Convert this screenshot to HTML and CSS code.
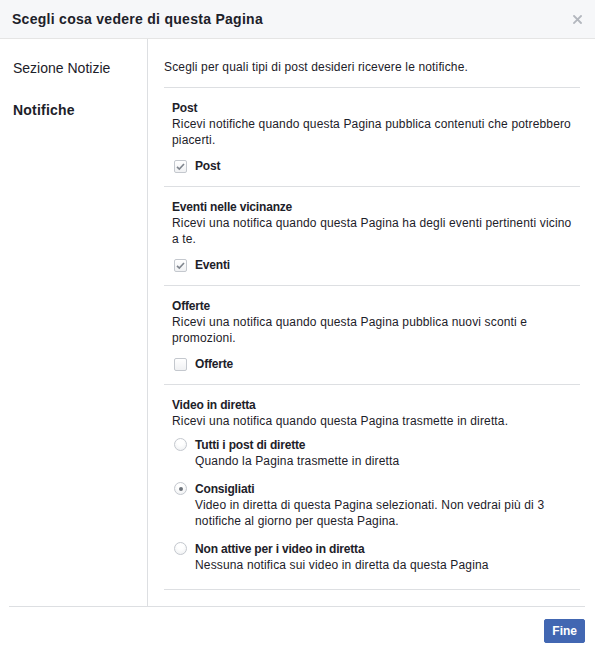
FILE: index.html
```html
<!DOCTYPE html>
<html lang="it">
<head>
<meta charset="utf-8">
<title>Scegli cosa vedere di questa Pagina</title>
<link rel="stylesheet" href="styles.css">
</head>
<body>
<div class="dialog">
  <div class="header">
    <h1 class="title">Scegli cosa vedere di questa Pagina</h1>
    <span class="close" aria-label="Chiudi">
      <svg width="9" height="9" viewBox="0 0 9 9"><path d="M1 1 L8 8 M8 1 L1 8" stroke="#b3b7be" stroke-width="1.8" stroke-linecap="square" fill="none"/></svg>
    </span>
  </div>
  <div class="main">
    <nav class="nav">
      <div class="nav-item">Sezione Notizie</div>
      <div class="nav-item active">Notifiche</div>
    </nav>
    <div class="content">
      <div class="intro">Scegli per quali tipi di post desideri ricevere le notifiche.</div>

      <div class="section">
        <div class="sec-title">Post</div>
        <div class="sec-desc">Ricevi notifiche quando questa Pagina pubblica contenuti che potrebbero piacerti.</div>
        <div class="check-row">
          <span class="checkbox checked"><svg width="11" height="11" viewBox="0 0 11 11"><path d="M2 5.8 L4.3 8 L9 3" stroke="#7f858d" stroke-width="1.6" fill="none"/></svg></span>
          <span class="opt-label">Post</span>
        </div>
      </div>

      <div class="section">
        <div class="sec-title">Eventi nelle vicinanze</div>
        <div class="sec-desc">Ricevi una notifica quando questa Pagina ha degli eventi pertinenti vicino a te.</div>
        <div class="check-row">
          <span class="checkbox checked"><svg width="11" height="11" viewBox="0 0 11 11"><path d="M2 5.8 L4.3 8 L9 3" stroke="#7f858d" stroke-width="1.6" fill="none"/></svg></span>
          <span class="opt-label">Eventi</span>
        </div>
      </div>

      <div class="section">
        <div class="sec-title">Offerte</div>
        <div class="sec-desc">Ricevi una notifica quando questa Pagina pubblica nuovi sconti e promozioni.</div>
        <div class="check-row">
          <span class="checkbox"></span>
          <span class="opt-label">Offerte</span>
        </div>
      </div>

      <div class="section last">
        <div class="sec-title">Video in diretta</div>
        <div class="sec-desc">Ricevi una notifica quando questa Pagina trasmette in diretta.</div>
        <div class="radio-row first">
          <span class="radio"></span>
          <div class="radio-text">
            <div class="opt-label">Tutti i post di dirette</div>
            <div class="opt-desc">Quando la Pagina trasmette in diretta</div>
          </div>
        </div>
        <div class="radio-row">
          <span class="radio selected"></span>
          <div class="radio-text">
            <div class="opt-label">Consigliati</div>
            <div class="opt-desc">Video in diretta di questa Pagina selezionati. Non vedrai più di 3 notifiche al giorno per questa Pagina.</div>
          </div>
        </div>
        <div class="radio-row">
          <span class="radio"></span>
          <div class="radio-text">
            <div class="opt-label">Non attive per i video in diretta</div>
            <div class="opt-desc">Nessuna notifica sui video in diretta da questa Pagina</div>
          </div>
        </div>
      </div>
    </div>
  </div>
  <div class="footer">
    <button class="btn" type="button">Fine</button>
  </div>
</div>
</body>
</html>
```

FILE: styles.css
```css
* { box-sizing: border-box; }

body {
  margin: 0;
  background: #ffffff;
  font-family: "Liberation Sans", Arial, Helvetica, sans-serif;
  font-size: 12px;
  line-height: 16px;
  color: #1d2129;
  letter-spacing: 0.15px;
}

.dialog {
  width: 595px;
  background: #ffffff;
}

.header {
  height: 39px;
  background: #f6f7f9;
  border-bottom: 1px solid #e5e5e5;
  display: flex;
  align-items: center;
  justify-content: space-between;
  padding: 0 12px 0 12px;
}

.title {
  margin: 0;
  font-size: 14px;
  line-height: 18px;
  font-weight: bold;
  color: #1d2129;
  letter-spacing: 0.28px;
}

.close {
  display: flex;
  align-items: center;
  justify-content: center;
  width: 9px;
  height: 9px;
  margin-right: 1px;
}

.main {
  display: flex;
}

.nav {
  width: 148px;
  flex: none;
  border-right: 1px solid #dddfe2;
  padding: 20px 0 0 13px;
  display: flex;
  flex-direction: column;
  gap: 24px;
  letter-spacing: 0;
}

.nav-item {
  font-size: 14px;
  line-height: 18px;
  color: #1d2129;
}

.nav-item.active {
  font-weight: bold;
  letter-spacing: 0.2px;
}

.content {
  flex: 1;
  padding: 20px 15px 16px 16px;
}

.intro {
  padding-bottom: 12px;
  border-bottom: 1px solid #dddfe2;
}

.section {
  padding: 12px 0 12px 8px;
  border-bottom: 1px solid #dddfe2;
}

.section.last {
  padding-bottom: 16px;
}

.sec-title,
.opt-label {
  font-weight: bold;
  letter-spacing: -0.18px;
}

.check-row {
  display: flex;
  align-items: center;
  margin: 10px 0 0 2px;
  height: 16px;
}

.checkbox {
  width: 13px;
  height: 13px;
  border: 1px solid #c4c8ce;
  border-radius: 2px;
  background: linear-gradient(#ffffff, #f0f1f3);
  display: flex;
  align-items: center;
  justify-content: center;
  margin-right: 8px;
  flex: none;
}

.radio-row {
  display: flex;
  align-items: flex-start;
  margin: 12px 0 0 2px;
}

.radio-row.first {
  margin-top: 8px;
}

.radio {
  width: 13px;
  height: 13px;
  border: 1px solid #c4c8ce;
  border-radius: 50%;
  background: radial-gradient(circle at 50% 30%, #ffffff 30%, #eceef0 100%);
  margin: 1px 8px 0 0;
  flex: none;
  display: flex;
  align-items: center;
  justify-content: center;
}

.radio.selected::after {
  content: "";
  width: 4px;
  height: 4px;
  border-radius: 50%;
  background: #6d737b;
}

.btn {
  font-family: "Liberation Sans", Arial, Helvetica, sans-serif;
  font-size: 12px;
  font-weight: bold;
  color: #ffffff;
  background: #4267b2;
  border: 1px solid #4267b2;
  border-radius: 2px;
  height: 24px;
  padding: 0 7px;
  line-height: 22px;
  letter-spacing: 0;
}

.footer {
  margin: 0 10px 0 9px;
  border-top: 1px solid #dddfe2;
  padding: 12px 0;
  display: flex;
  justify-content: flex-end;
}
```
